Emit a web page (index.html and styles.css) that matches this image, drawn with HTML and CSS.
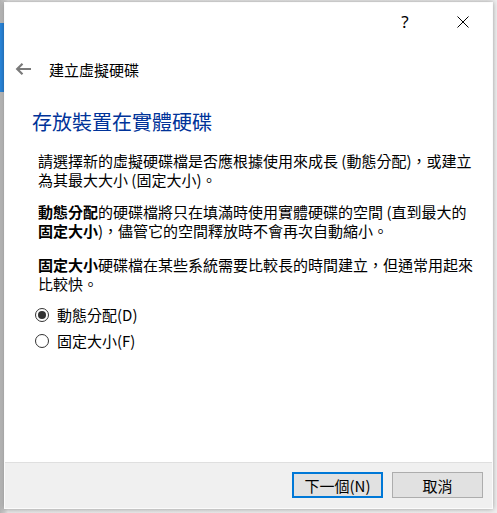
FILE: index.html
```html
<!DOCTYPE html>
<html lang="zh-Hant">
<head>
<meta charset="utf-8">
<title>建立虛擬硬碟</title>
<link rel="stylesheet" href="styles.css">
</head>
<body>
<div class="dialog">
  <div class="titlebar">
    <span class="tb-btn help">?</span>
    <span class="tb-btn close">
      <svg width="12" height="12" viewBox="0 0 12 12"><path d="M0.5 0.5L11.5 11.5M11.5 0.5L0.5 11.5" stroke="#000" stroke-width="1" fill="none"/></svg>
    </span>
  </div>
  <div class="header">
    <svg class="back" width="16" height="12" viewBox="0 0 16 12"><path d="M16 6H2.5M7.5 0.8L2.2 6l5.3 5.2" stroke="#7a7a7a" stroke-width="2.2" fill="none"/></svg>
    <span class="wizard-title">建立虛擬硬碟</span>
  </div>
  <div class="content">
    <h1 class="heading">存放裝置在實體硬碟</h1>
    <p class="para">請選擇新的虛擬硬碟檔是否應根據使用來成長 (動態分配)，或建立<br>為其最大大小 (固定大小)。</p>
    <p class="para p2"><b>動態分配</b>的硬碟檔將只在填滿時使用實體硬碟的空間 (直到最大的<br><b>固定大小</b>)，儘管它的空間釋放時不會再次自動縮小。</p>
    <p class="para p3"><b>固定大小</b>硬碟檔在某些系統需要比較長的時間建立，但通常用起來<br>比較快。</p>
    <div class="radios">
      <div class="radio"><span class="circle checked"></span><span class="radio-label">動態分配(D)</span></div>
      <div class="radio"><span class="circle"></span><span class="radio-label">固定大小(F)</span></div>
    </div>
  </div>
  <div class="footer">
    <button class="btn primary">下一個(N)</button>
    <button class="btn">取消</button>
  </div>
</div>
</body>
</html>
```
FILE: styles.css
```css
* { box-sizing: border-box; }
html, body { margin: 0; padding: 0; }
body {
  width: 497px;
  height: 513px;
  overflow: hidden;
  padding: 2px 0 0 4px;
  background:
    linear-gradient(#2a86dc, #2a86dc) 0 23px / 4px 69px no-repeat,
    linear-gradient(to right, #b4b4b4 0, #c8c8c8 4px, #e6e6e6 8px, #eeeeee 100%);
  font-family: "Noto Sans CJK TC", "Noto Sans", sans-serif;
  color: #000;
}
.dialog {
  width: 489px;
  height: 507px;
  background: #fff;
  border: 1px solid #fbfbfb;
  box-shadow: 0 0 5px rgba(0, 0, 0, 0.35);
  display: flex;
  flex-direction: column;
}
.titlebar {
  height: 37px;
  display: flex;
  justify-content: flex-end;
  align-items: center;
}
.tb-btn {
  width: 58px;
  height: 37px;
  display: flex;
  align-items: center;
  justify-content: center;
}
.help {
  font-family: "Noto Sans", sans-serif;
  font-size: 17px;
  line-height: 1;
}
.close svg { display: block; }
.header {
  display: flex;
  align-items: center;
  height: 19px;
  margin-top: 20px;
  padding-left: 10px;
}
.back {
  display: block;
  margin-right: 18px;
  margin-bottom: 2px;
}
.wizard-title {
  font-size: 15px;
  line-height: 19px;
}
.content { flex: 1; }
.heading {
  font-size: 20px;
  line-height: 26px;
  font-weight: 400;
  color: #003399;
  margin: 30px 0 0 27px;
}
.para {
  font-size: 15px;
  line-height: 19px;
  margin: 16px 0 0 33px;
  white-space: nowrap;
}
.para b { font-weight: 700; }
.p2 { margin-top: 13px; }
.p3 { margin-top: 15px; }
.radios {
  margin: 12px 0 0 30px;
  display: flex;
  flex-direction: column;
  gap: 7px;
}
.radio {
  display: flex;
  align-items: center;
  height: 19px;
  font-size: 15px;
  line-height: 19px;
}
.circle {
  width: 14px;
  height: 14px;
  border: 1px solid #333;
  border-radius: 50%;
  margin-right: 8px;
  display: flex;
  align-items: center;
  justify-content: center;
  background: #fff;
}
.circle.checked::after {
  content: "";
  width: 8px;
  height: 8px;
  border-radius: 50%;
  background: #333;
}
.footer {
  height: 46px;
  border-top: 1px solid #dfdfdf;
  background: #f0f0f0;
  display: flex;
  justify-content: flex-end;
  align-items: flex-start;
  gap: 9px;
  padding: 9px 9px 0 0;
}
.btn {
  width: 91px;
  height: 26px;
  padding: 0;
  background: #e1e1e1;
  border: 1px solid #adadad;
  font-family: "Noto Sans CJK TC", "Noto Sans", sans-serif;
  font-size: 15px;
  line-height: 19px;
  color: #000;
}
.btn.primary { border: 2px solid #0078d7; }
```
